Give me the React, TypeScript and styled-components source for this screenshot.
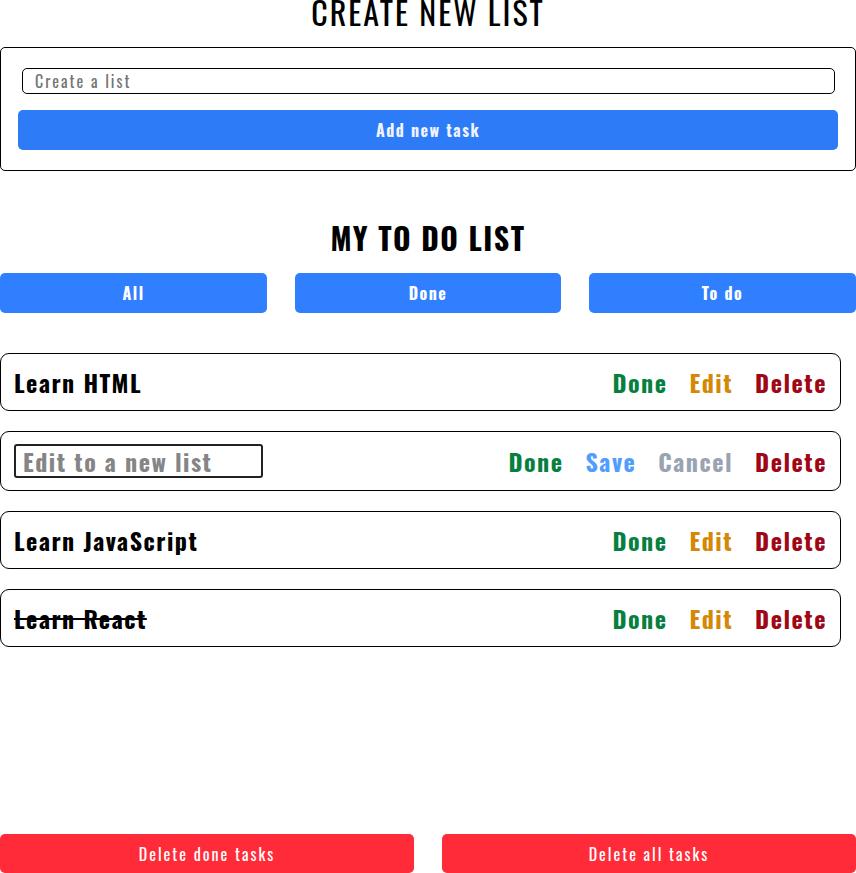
import React from "react";
import styled, { createGlobalStyle } from "styled-components";

const FONT = `"Oswald", "Liberation Sans Narrow", "DejaVu Sans Condensed", sans-serif`;

const Global = createGlobalStyle`
  * { box-sizing: border-box; }
  body { margin: 0; font-family: ${FONT}; background: #fff; color: #000; }
`;

const Page = styled.div`
  width: 856px;
  display: flex;
  flex-direction: column;
`;

const Title = styled.h1`
  margin: 0;
  text-align: center;
  font-size: 32px;
  font-weight: 400;
  letter-spacing: 2px;
  line-height: 1;
`;

const TopTitle = styled(Title)`
  margin-top: -4px;
  height: 51px;
`;

const ListTitle = styled(Title)`
  font-size: 30px;
  font-weight: 700;
  letter-spacing: 1.5px;
`;

const Card = styled.div`
  border: 1px solid #000;
  border-radius: 5px;
  padding: 20px 17px 20px 17px;
  display: flex;
  flex-direction: column;
  gap: 16px;
`;

const TextInput = styled.input`
  margin: 0 3px 0 4px;
  height: 26px;
  border: 1px solid #000;
  border-radius: 5px;
  padding: 0 12px;
  font-family: ${FONT};
  font-size: 16px;
  letter-spacing: 2px;
  &::placeholder { color: #757575; }
`;

const BlueButton = styled.button`
  height: 40px;
  border: none;
  border-radius: 5px;
  background: #2e7bf7;
  color: #f0f4ff;
  font-family: ${FONT};
  font-size: 16px;
  font-weight: 700;
  letter-spacing: 1.5px;
`;

const Section = styled.div`
  margin-top: 52px;
  display: flex;
  flex-direction: column;
`;

const Filters = styled.div`
  margin-top: 20px;
  display: grid;
  grid-template-columns: 267px 266px 267px;
  justify-content: space-between;
`;

const FilterButton = styled(BlueButton)`
  background: #2f7fff;
  color: #fff;
`;

const List = styled.div`
  margin-top: 40px;
  width: 841px;
  display: flex;
  flex-direction: column;
  gap: 20px;
`;

const Row = styled.div<{ $h: number }>`
  height: ${(p) => p.$h}px;
  border: 1px solid #000;
  border-radius: 9px;
  padding: 0 13px;
  display: flex;
  align-items: center;
  justify-content: space-between;
`;

const TaskText = styled.span<{ $done?: boolean }>`
  font-size: 24px;
  font-weight: 700;
  letter-spacing: 1.5px;
  text-decoration: ${(p) => (p.$done ? "line-through" : "none")};
  text-decoration-thickness: 2px;
`;

const EditInput = styled.input`
  width: 249px;
  height: 34px;
  border: 2px solid #222;
  border-radius: 3px;
  padding: 0 7px;
  font-family: ${FONT};
  font-size: 24px;
  font-weight: 700;
  letter-spacing: 1.5px;
  &::placeholder { color: #858585; }
`;

const Actions = styled.div`
  display: flex;
  gap: 22px;
`;

const Action = styled.span<{ $c: string }>`
  color: ${(p) => p.$c};
  font-size: 24px;
  font-weight: 700;
  letter-spacing: 1.5px;
`;

const Footer = styled.div`
  margin-top: 187px;
  display: grid;
  grid-template-columns: 414px 414px;
  justify-content: space-between;
`;

const RedButton = styled.button`
  height: 39px;
  border: none;
  border-radius: 5px;
  background: #ff2b39;
  color: #fff;
  font-family: ${FONT};
  font-size: 16px;
  letter-spacing: 2px;
`;

const C = {
  done: "#07803f",
  edit: "#d48806",
  del: "#a00716",
  save: "#4f9dff",
  cancel: "#9aa3b2",
};

const tasks = [
  { text: "Learn HTML", done: false, editing: false, h: 58 },
  { text: "", done: false, editing: true, h: 60 },
  { text: "Learn JavaScript", done: false, editing: false, h: 58 },
  { text: "Learn React", done: true, editing: false, h: 58 },
];

export default function App() {
  return (
    <Page>
      <Global />
      <TopTitle>CREATE NEW LIST</TopTitle>
      <Card>
        <TextInput placeholder="Create a list" />
        <BlueButton>Add new task</BlueButton>
      </Card>
      <Section>
        <ListTitle>MY TO DO LIST</ListTitle>
        <Filters>
          <FilterButton>All</FilterButton>
          <FilterButton>Done</FilterButton>
          <FilterButton>To do</FilterButton>
        </Filters>
        <List>
          {tasks.map((t, i) => (
            <Row key={i} $h={t.h}>
              {t.editing ? (
                <EditInput placeholder="Edit to a new list" />
              ) : (
                <TaskText $done={t.done}>{t.text}</TaskText>
              )}
              <Actions>
                <Action $c={C.done}>Done</Action>
                {t.editing ? (
                  <>
                    <Action $c={C.save}>Save</Action>
                    <Action $c={C.cancel}>Cancel</Action>
                  </>
                ) : (
                  <Action $c={C.edit}>Edit</Action>
                )}
                <Action $c={C.del}>Delete</Action>
              </Actions>
            </Row>
          ))}
        </List>
      </Section>
      <Footer>
        <RedButton>Delete done tasks</RedButton>
        <RedButton>Delete all tasks</RedButton>
      </Footer>
    </Page>
  );
}
